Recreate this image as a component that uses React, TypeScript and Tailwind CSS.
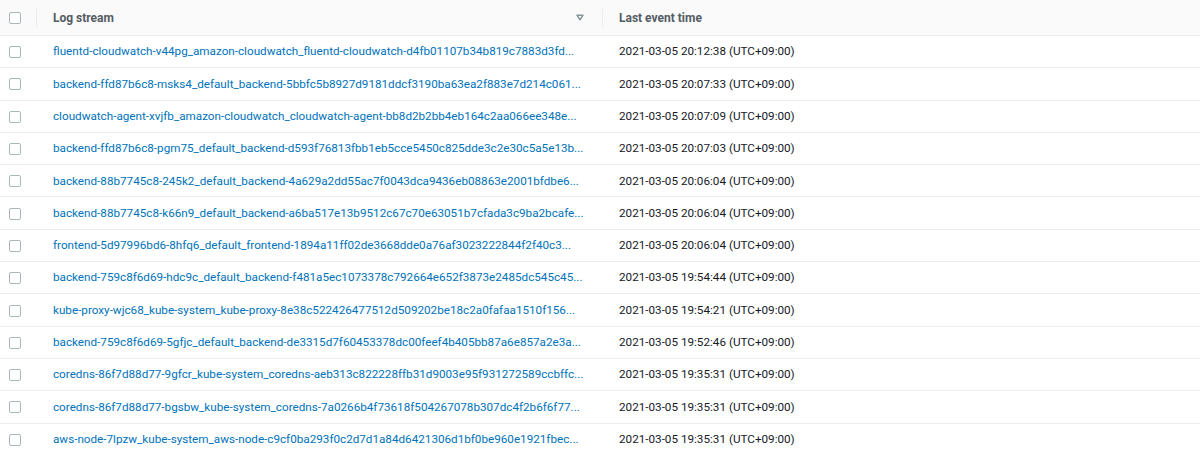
import React from "react";

const streams: [string, string][] = [
  ["fluentd-cloudwatch-v44pg_amazon-cloudwatch_fluentd-cloudwatch-d4fb01107b34b819c7883d3fd...", "2021-03-05 20:12:38 (UTC+09:00)"],
  ["backend-ffd87b6c8-msks4_default_backend-5bbfc5b8927d9181ddcf3190ba63ea2f883e7d214c061...", "2021-03-05 20:07:33 (UTC+09:00)"],
  ["cloudwatch-agent-xvjfb_amazon-cloudwatch_cloudwatch-agent-bb8d2b2bb4eb164c2aa066ee348e...", "2021-03-05 20:07:09 (UTC+09:00)"],
  ["backend-ffd87b6c8-pgm75_default_backend-d593f76813fbb1eb5cce5450c825dde3c2e30c5a5e13b...", "2021-03-05 20:07:03 (UTC+09:00)"],
  ["backend-88b7745c8-245k2_default_backend-4a629a2dd55ac7f0043dca9436eb08863e2001bfdbe6...", "2021-03-05 20:06:04 (UTC+09:00)"],
  ["backend-88b7745c8-k66n9_default_backend-a6ba517e13b9512c67c70e63051b7cfada3c9ba2bcafe...", "2021-03-05 20:06:04 (UTC+09:00)"],
  ["frontend-5d97996bd6-8hfq6_default_frontend-1894a11ff02de3668dde0a76af3023222844f2f40c3...", "2021-03-05 20:06:04 (UTC+09:00)"],
  ["backend-759c8f6d69-hdc9c_default_backend-f481a5ec1073378c792664e652f3873e2485dc545c45...", "2021-03-05 19:54:44 (UTC+09:00)"],
  ["kube-proxy-wjc68_kube-system_kube-proxy-8e38c522426477512d509202be18c2a0fafaa1510f156...", "2021-03-05 19:54:21 (UTC+09:00)"],
  ["backend-759c8f6d69-5gfjc_default_backend-de3315d7f60453378dc00feef4b405bb87a6e857a2e3a...", "2021-03-05 19:52:46 (UTC+09:00)"],
  ["coredns-86f7d88d77-9gfcr_kube-system_coredns-aeb313c822228ffb31d9003e95f931272589ccbffc...", "2021-03-05 19:35:31 (UTC+09:00)"],
  ["coredns-86f7d88d77-bgsbw_kube-system_coredns-7a0266b4f73618f504267078b307dc4f2b6f6f77...", "2021-03-05 19:35:31 (UTC+09:00)"],
  ["aws-node-7lpzw_kube-system_aws-node-c9cf0ba293f0c2d7d1a84d6421306d1bf0be960e1921fbec...", "2021-03-05 19:35:31 (UTC+09:00)"],
];

const Checkbox = () => (
  <span className="block w-[12px] h-[12px] border border-[#aab7b8] rounded-[2px] bg-white" />
);

const App = () => {
  return (
    <div
      className="w-[1200px] h-[451px] bg-white overflow-hidden text-[11.7px]"
      style={{ fontFamily: "Roboto, 'Noto Sans', sans-serif" }}
    >
      {/* Header */}
      <div className="flex items-center h-[36px] bg-[#fafafa] border-b border-[#eaeded] text-[12px]">
        <div className="w-[36px] pl-[9px] flex items-center">
          <Checkbox />
        </div>
        <div className="w-px h-[18px] bg-[#eaeded]" />
        <div className="w-[565px] flex items-center pl-[16px] pr-[16px]">
          <span className="font-bold text-[#545b64]">Log stream</span>
          <svg className="ml-auto mr-[2px]" width="8" height="7" viewBox="0 0 8 7">
            <path d="M1 1.2 H7 L4 5.8 Z" fill="none" stroke="#879596" strokeWidth="1.5" strokeLinejoin="round" />
          </svg>
        </div>
        <div className="w-px h-[18px] bg-[#eaeded]" />
        <div className="flex-1 pl-[16px]">
          <span className="font-bold text-[#545b64]">Last event time</span>
        </div>
      </div>

      {/* Rows */}
      {streams.map(([name, time]) => (
        <div key={name} className="flex items-center h-[32.3px] border-b border-[#eaeded] pt-[1px]">
          <div className="w-[36px] pl-[9px] flex items-center">
            <Checkbox />
          </div>
          <div className="w-[566px] pl-[17px] pr-[16px] whitespace-nowrap overflow-hidden">
            <a href="#" className="text-[#0073bb]">{name}</a>
          </div>
          <div className="flex-1 pl-[17px] text-[#16191f]">{time}</div>
        </div>
      ))}
    </div>
  );
};

export default App;
